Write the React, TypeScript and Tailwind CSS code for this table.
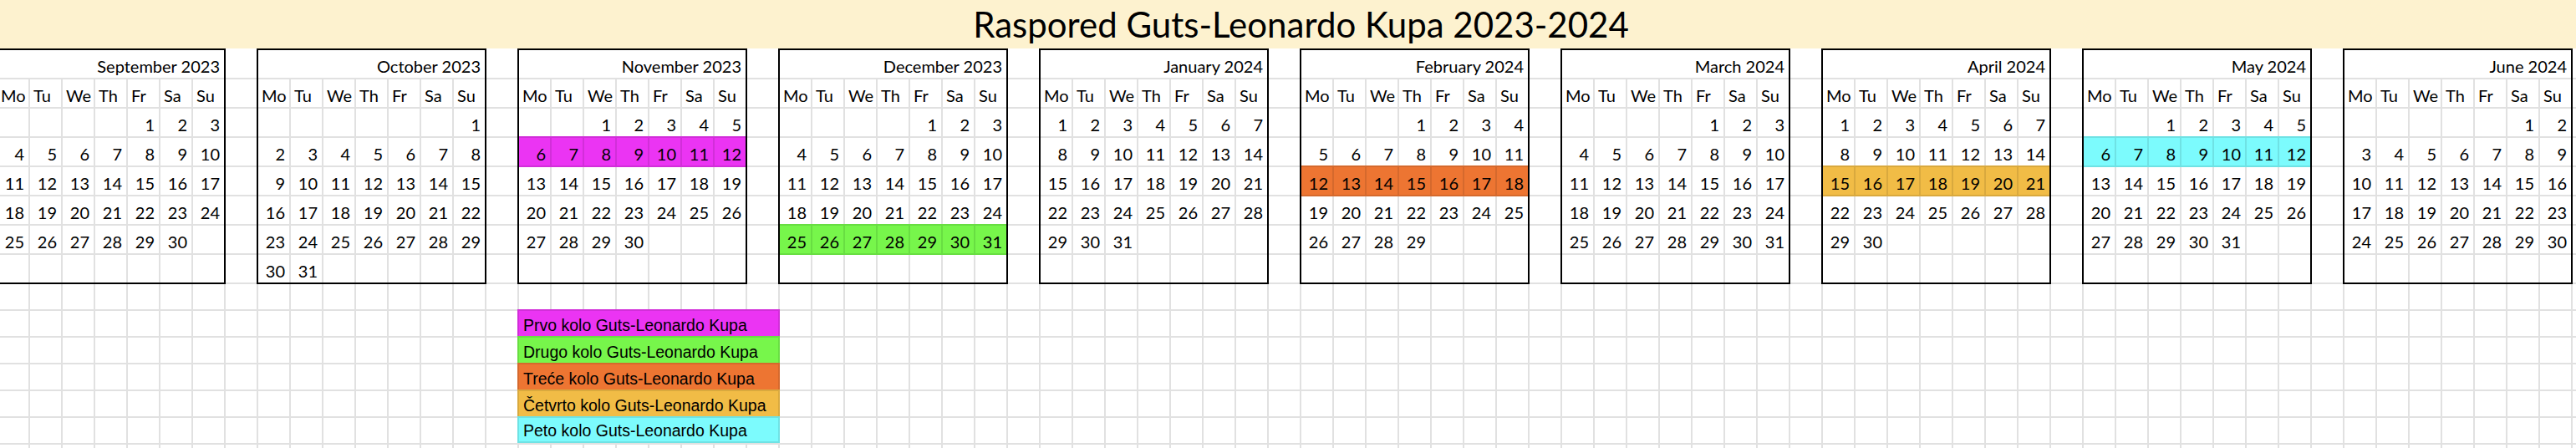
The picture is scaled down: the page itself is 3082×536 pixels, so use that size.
import React from "react";

const DAYS = ["Mo", "Tu", "We", "Th", "Fr", "Sa", "Su"];

type Hl = { row: number; bg: string; border: string };

const HL: Record<string, { bg: string; border: string }> = {
  magenta: { bg: "bg-[#eb34f3]", border: "border-[#d22ed9]" },
  green: { bg: "bg-[#77f64b]", border: "border-[#68de42]" },
  orange: { bg: "bg-[#ed7532]", border: "border-[#d5692d]" },
  gold: { bg: "bg-[#f1bc46]", border: "border-[#d9a93e]" },
  cyan: { bg: "bg-[#7cfbfd]", border: "border-[#6fe2e4]" },
};

const MONTHS: { y: number; m: number; name: string; hl?: Hl }[] = [
  { y: 2023, m: 8, name: "September 2023" },
  { y: 2023, m: 9, name: "October 2023" },
  { y: 2023, m: 10, name: "November 2023", hl: { row: 1, ...HL.magenta } },
  { y: 2023, m: 11, name: "December 2023", hl: { row: 4, ...HL.green } },
  { y: 2024, m: 0, name: "January 2024" },
  { y: 2024, m: 1, name: "February 2024", hl: { row: 2, ...HL.orange } },
  { y: 2024, m: 2, name: "March 2024" },
  { y: 2024, m: 3, name: "April 2024", hl: { row: 2, ...HL.gold } },
  { y: 2024, m: 4, name: "May 2024", hl: { row: 1, ...HL.cyan } },
  { y: 2024, m: 5, name: "June 2024" },
];

const LEGEND = [
  { text: "Prvo kolo Guts-Leonardo Kupa", ...HL.magenta },
  { text: "Drugo kolo Guts-Leonardo Kupa", ...HL.green },
  { text: "Treće kolo Guts-Leonardo Kupa", ...HL.orange },
  { text: "Četvrto kolo Guts-Leonardo Kupa", ...HL.gold },
  { text: "Peto kolo Guts-Leonardo Kupa", ...HL.cyan },
];

function weeksOf(y: number, m: number): (number | null)[][] {
  const offset = (new Date(y, m, 1).getDay() + 6) % 7;
  const count = new Date(y, m + 1, 0).getDate();
  const cells: (number | null)[] = [];
  for (let i = 0; i < 42; i++) {
    const d = i - offset + 1;
    cells.push(d >= 1 && d <= count ? d : null);
  }
  const weeks: (number | null)[][] = [];
  for (let w = 0; w < 6; w++) weeks.push(cells.slice(w * 7, w * 7 + 7));
  return weeks;
}

function GridCells({ rows }: { rows: number }) {
  return (
    <div className="grid grid-cols-[repeat(8,39px)]">
      {Array.from({ length: rows * 8 }).map((_, i) => (
        <div key={i} className="h-[32px] border-b-2 border-l-2 border-[#e1e1e1]" />
      ))}
    </div>
  );
}

function Legend() {
  return (
    <div className="relative z-10 mt-[-2px] flex w-[314px] flex-col font-['Liberation_Sans',Arial,sans-serif] text-[19.5px] leading-none">
      {LEGEND.map((l, i) => (
        <div
          key={i}
          className={`flex h-[32px] items-end whitespace-nowrap pb-[3px] pl-[5px] ${l.bg} ${l.border} ${
            i === LEGEND.length - 1 ? "border-2" : "border-x-2 border-t-2"
          }`}
        >
          {l.text}
        </div>
      ))}
    </div>
  );
}

function Month({ y, m, name, hl, legend }: { y: number; m: number; name: string; hl?: Hl; legend?: boolean }) {
  const weeks = weeksOf(y, m);
  return (
    <div className="flex w-[312px] shrink-0 flex-col">
      <div className="flex">
        <div className="flex h-[282px] w-[275px] flex-col border-2 border-black">
          <div className="flex h-[35px] items-end justify-end border-b-2 border-[#e1e1e1] pb-[4px] pr-[5px]">
            {name}
          </div>
          <div className="grid h-[35px] grid-cols-[37px_repeat(6,39px)] border-b-2 border-[#e1e1e1]">
            {DAYS.map((d, i) => (
              <div
                key={d}
                className={`flex items-end pb-[4px] pl-[4px] ${i > 0 ? "border-l-2 border-[#e1e1e1]" : ""}`}
              >
                {d}
              </div>
            ))}
          </div>
          {weeks.map((w, wi) => {
            const last = wi === 5;
            const h = hl && hl.row === wi;
            const rowCls = h
              ? `mt-[-2px] h-[37px] border-y-2 ${hl!.bg} ${hl!.border}`
              : last
              ? "h-[33px]"
              : "h-[35px] border-b-2 border-[#e1e1e1]";
            return (
              <div key={wi} className={`grid grid-cols-[37px_repeat(6,39px)] ${rowCls}`}>
                {w.map((d, i) => (
                  <div
                    key={i}
                    className={`flex items-end justify-end pb-[4px] pr-[5px] ${
                      i > 0 ? (h ? `border-l-2 ${hl!.border}` : "border-l-2 border-[#e1e1e1]") : ""
                    }`}
                  >
                    {d ?? ""}
                  </div>
                ))}
              </div>
            );
          })}
        </div>
        <div className="flex w-[37px] flex-col pt-[2px]">
          {Array.from({ length: 8 }).map((_, i) => (
            <div key={i} className="h-[35px] border-b-2 border-[#e1e1e1]" />
          ))}
        </div>
      </div>
      {legend ? (
        <>
          <GridCells rows={1} />
          <Legend />
          <div className="grid grid-cols-[repeat(8,39px)]">
            {Array.from({ length: 8 }).map((_, i) => (
              <div key={i} className="h-[32px] border-l-2 border-t-2 border-[#e1e1e1]" />
            ))}
          </div>
        </>
      ) : (
        <GridCells rows={7} />
      )}
    </div>
  );
}

export default function App() {
  return (
    <div className="h-[536px] w-[3082px] overflow-hidden bg-white font-['Lato',sans-serif] text-[20px] leading-none text-black">
      <div className="flex h-[58px] items-center justify-center bg-[#fdf2cf] pl-[31px] text-[42px]">
        Raspored Guts-Leonardo Kupa 2023-2024
      </div>
      <div className="ml-[-5px] flex">
        {MONTHS.map((mo, i) => (
          <Month key={i} y={mo.y} m={mo.m} name={mo.name} hl={mo.hl} legend={i === 2} />
        ))}
      </div>
    </div>
  );
}
